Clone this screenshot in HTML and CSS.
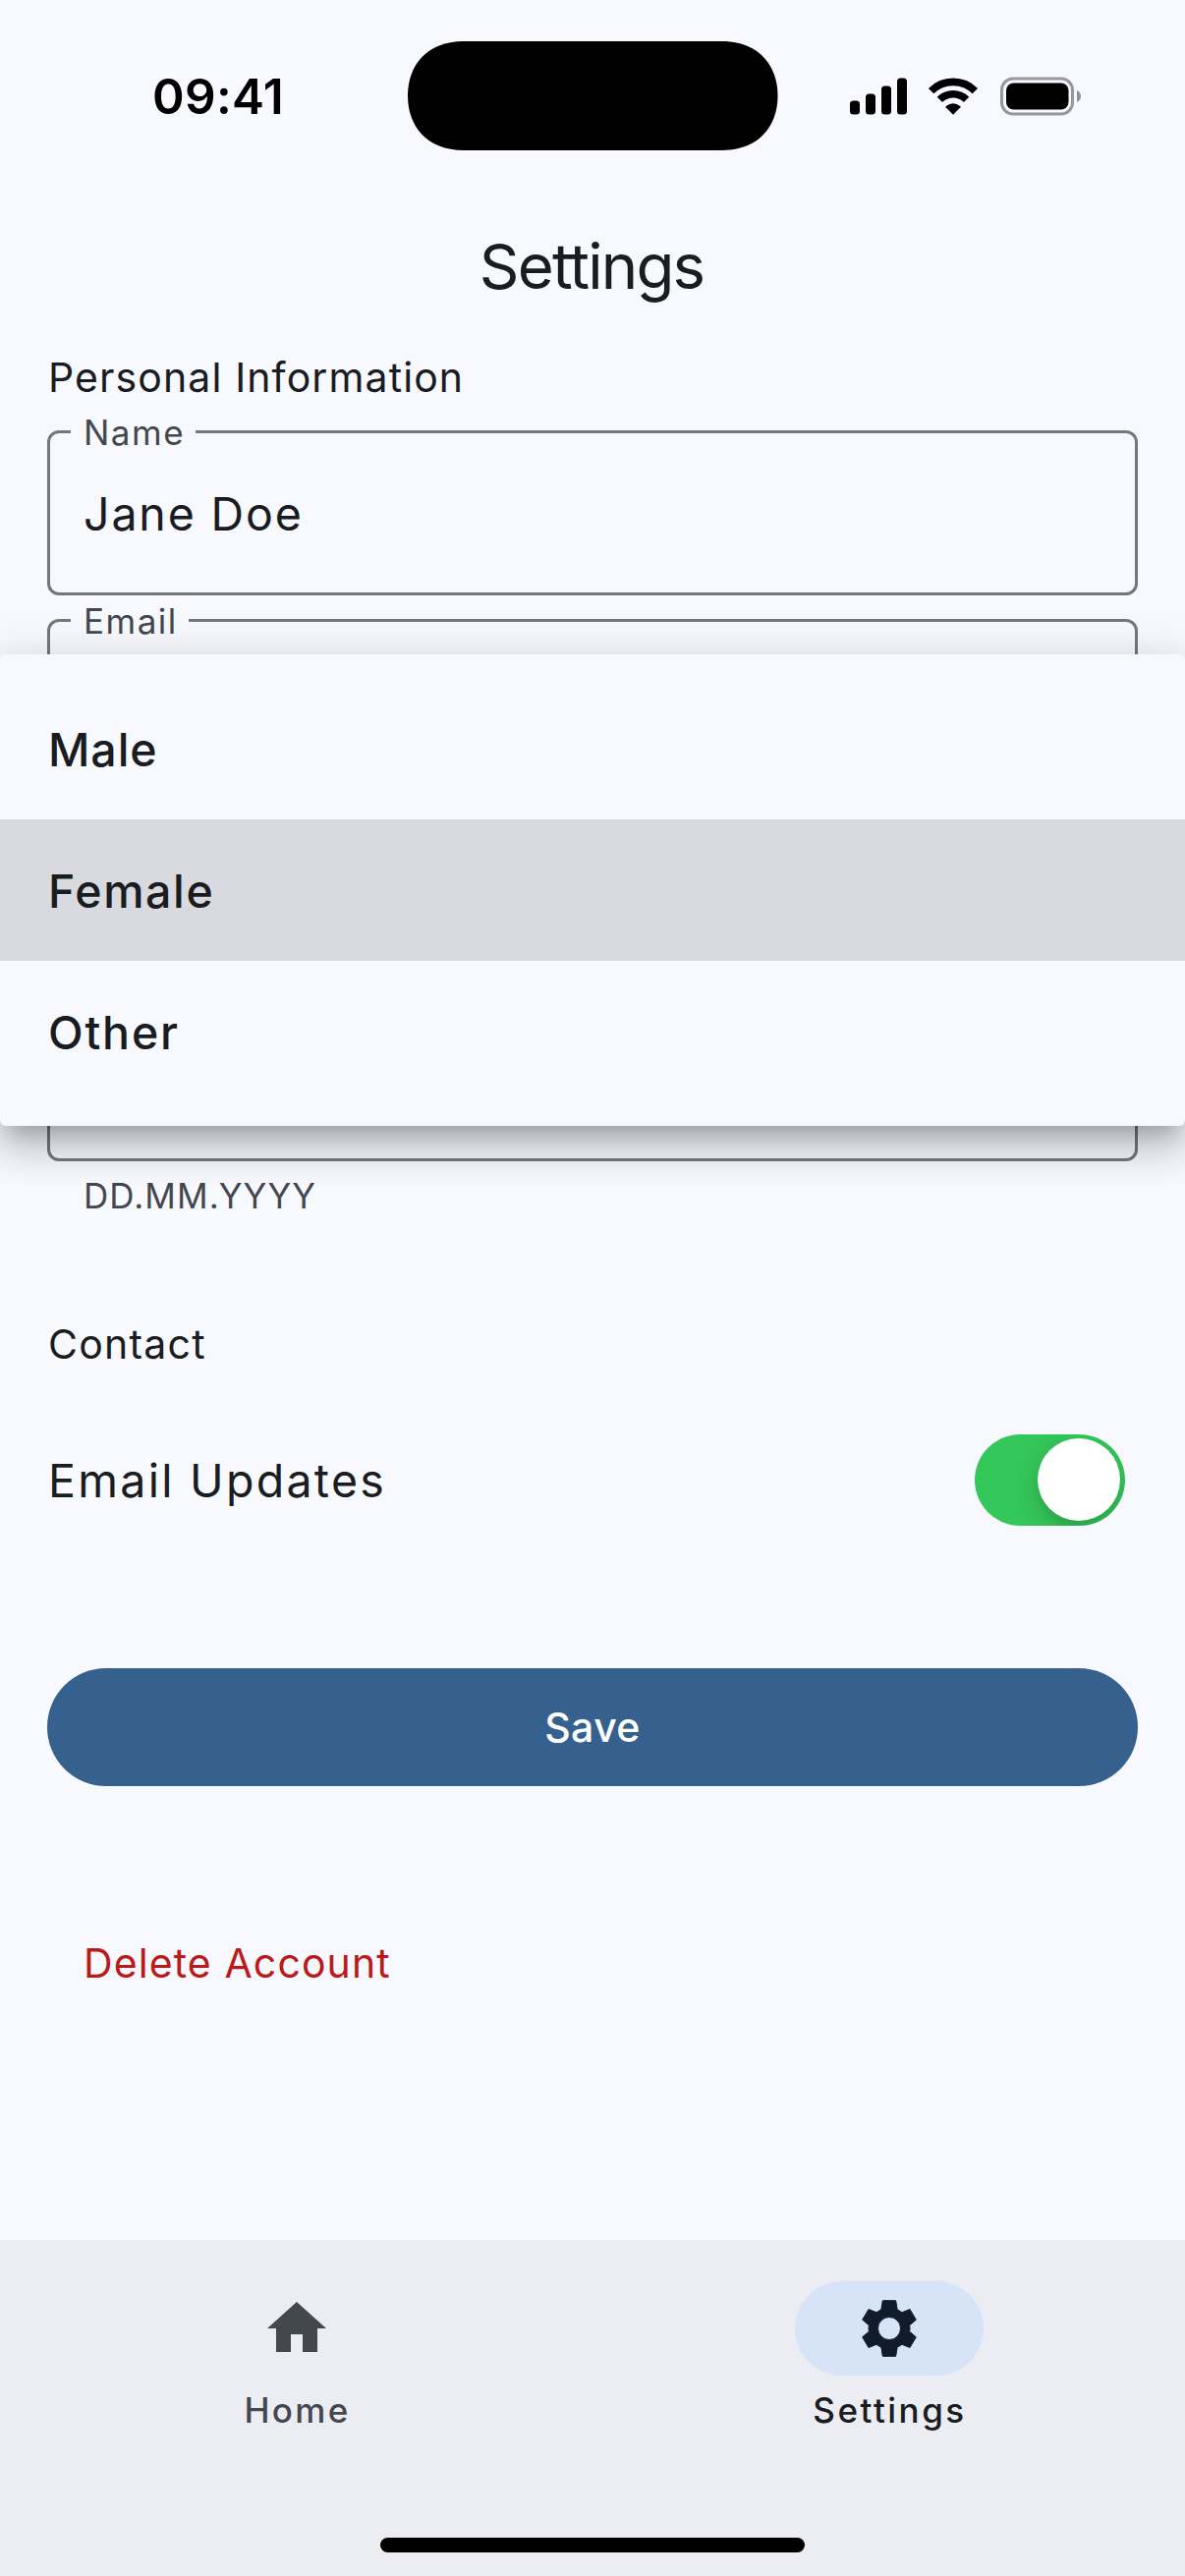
FILE: index.html
```html
<!DOCTYPE html>
<html lang="en">
<head>
<meta charset="utf-8">
<title>Settings</title>
<link rel="stylesheet" href="styles.css">
</head>
<body>
<div class="phone">
  <header class="status">
    <div class="status-left"><span class="time">09:41</span></div>
    <svg class="island" viewBox="0 0 377 111" aria-hidden="true">
      <path d="M57 0H320C358 0 377 25 377 55.500C377 86 358 111 320 111H57C19 111 0 86 0 55.500C0 25 19 0 57 0Z"/>
    </svg>
    <div class="status-right">
      <svg class="signal" viewBox="0 0 58 40" aria-hidden="true">
        <rect x="0" y="24.500" width="10" height="14" rx="3.500"/>
        <rect x="16" y="17.500" width="10" height="21" rx="3.500"/>
        <rect x="32" y="9.500" width="10" height="29" rx="3.500"/>
        <rect x="48" y="1.500" width="10" height="37" rx="3.500"/>
      </svg>
      <svg class="wifi" viewBox="0 0 52 40" aria-hidden="true">
        <path class="wave" d="M3.660 14.660A31.600 31.600 0 0 1 48.340 14.660"/>
        <path class="wave" d="M12.420 23.420A19.200 19.200 0 0 1 39.580 23.420"/>
        <path d="M26 38.800L18.600 31.300Q18.200 30.600 18.800 30Q26 24.300 33.200 30Q33.800 30.600 33.400 31.300Z"/>
      </svg>
      <svg class="battery" viewBox="0 0 83 40" aria-hidden="true">
        <rect class="shell" x="1.500" y="2" width="72" height="36" rx="11.500"/>
        <rect x="6" y="6.500" width="63.500" height="27" rx="7.500"/>
        <path class="nub" d="M78 14C80.600 15.200 82 17.400 82 20S80.600 24.800 78 26Z"/>
      </svg>
    </div>
  </header>

  <h1 class="title">Settings</h1>

  <main class="content">
    <h2 class="section personal">Personal Information</h2>
    <div class="fields">
      <div class="field"><span class="label">Name</span><span class="value">Jane Doe</span></div>
      <div class="field"><span class="label label-email">Email</span></div>
      <div class="field"></div>
      <div class="field"></div>
    </div>
    <p class="helper">DD.MM.YYYY</p>

    <h2 class="section contact">Contact</h2>
    <div class="row">
      <span class="row-text">Email Updates</span>
      <span class="switch"><span class="thumb"></span></span>
    </div>

    <button class="save">Save</button>
    <a class="delete">Delete Account</a>
  </main>

  <ul class="menu">
    <li class="option male">Male</li>
    <li class="option selected">Female</li>
    <li class="option other">Other</li>
  </ul>

  <nav class="nav">
    <div class="tabs">
      <div class="tab">
        <span class="pill"><svg class="icon" viewBox="0 0 24 24" aria-hidden="true"><path d="M10 20v-6h4v6h5v-8h3L12 3 2 12h3v8z"/></svg></span>
        <span class="tab-label home-label">Home</span>
      </div>
      <div class="tab active">
        <span class="pill"><svg class="icon gear" viewBox="-108 -108 216 216" aria-hidden="true"><path fill-rule="evenodd" d="M-20 -85H20L24.500 -58L39 -49L63 -58.500L82 -26.500L62 -9.500Q64 0 62 9.500L82 26.500L63 58.500L39 49L24.500 58L20 85H-20L-24.500 58L-39 49L-63 58.500L-82 26.500L-62 9.500Q-64 0 -62 -9.500L-82 -26.500L-63 -58.500L-39 -49L-24.500 -58ZM0 -34.500A34.500 34.500 0 1 0 0 34.500A34.500 34.500 0 1 0 0 -34.500Z"/></svg></span>
        <span class="tab-label">Settings</span>
      </div>
    </div>
    <div class="indicator"></div>
  </nav>
</div>
</body>
</html>
```
FILE: styles.css
```css
* { box-sizing: border-box; margin: 0; padding: 0; }

body {
  font-family: Inter, "Liberation Sans", sans-serif;
  color: #191c20;
  background: #f8f9ff;
}

.phone {
  position: relative;
  display: flex;
  flex-direction: column;
  width: 1206px;
  height: 2622px;
  overflow: hidden;
  background: #f8f9ff;
}

/* Status bar */
.status { display: flex; align-items: center; height: 195px; color: #000; }
.status-left { width: 415px; padding-left: 155px; }
.time { display: block; font-size: 49.500px; font-weight: 600; line-height: 60px; letter-spacing: 0.300px; }
.island { width: 376.500px; height: 111px; margin-top: -1px; }
.status-right { display: flex; align-items: center; padding-left: 73.500px; }
.signal { width: 58px; height: 40px; }
.wifi { width: 52px; height: 40px; margin-left: 21px; }
.wave { fill: none; stroke: #000; stroke-width: 7.600; }
.battery { width: 83px; height: 40px; margin-left: 22px; }
.shell { fill: none; stroke: #97989c; stroke-width: 3; }
.nub { fill: #8f9094; }

.title {
  height: 151px;
  padding-right: 2px;
  font-size: 63.500px;
  font-weight: 400;
  line-height: 151px;
  letter-spacing: -1.850px;
  text-align: center;
}

/* Form */
.content { display: flex; flex-direction: column; padding: 8px 48px 0; }
.section { padding-left: 1px; font-size: 41px; font-weight: 400; line-height: 60px; }
.personal { letter-spacing: 1.100px; }
.fields { display: flex; flex-direction: column; gap: 24px; margin-top: 24px; }
.field {
  position: relative;
  display: flex;
  align-items: center;
  width: 1110px;
  height: 168px;
  padding: 2px 34px 0;
  border: 3px solid #73777f;
  border-radius: 12px;
}
.label {
  position: absolute;
  top: -23px;
  left: 21px;
  width: 127px;
  padding-left: 13px;
  font-size: 35px;
  line-height: 44px;
  letter-spacing: 1.500px;
  color: #43474e;
  background: #f8f9ff;
}
.label-email { width: 120px; }
.value { font-size: 46.500px; line-height: 60px; letter-spacing: 1.850px; }
.helper {
  margin-top: 11px;
  padding-left: 37px;
  font-size: 35px;
  line-height: 48px;
  letter-spacing: 1.090px;
  color: #43474e;
}
.contact { margin-top: 97px; letter-spacing: 1.230px; }

.row {
  display: flex;
  align-items: center;
  justify-content: space-between;
  height: 144px;
  margin-top: 36px;
  padding-right: 13.500px;
}
.row-text { padding: 2px 0 0 1px; font-size: 46.500px; line-height: 60px; letter-spacing: 2.280px; }
.switch {
  display: flex;
  align-items: center;
  justify-content: flex-end;
  width: 153px;
  height: 93px;
  padding-right: 4.500px;
  border-radius: 46.500px;
  overflow: hidden;
  background: #34c759;
}
.thumb {
  width: 84px;
  height: 84px;
  border-radius: 50%;
  background: #fff;
  box-shadow: 0 9px 31px rgba(0, 0, 0, 0.150), 0 9px 6px rgba(0, 0, 0, 0.060);
}

.save {
  height: 120px;
  margin-top: 120px;
  border: 0;
  border-radius: 60px;
  font: 500 41px/120px Inter, "Liberation Sans", sans-serif;
  letter-spacing: 0.400px;
  color: #fff;
  background: #36618e;
}
.delete {
  margin-top: 150px;
  padding-left: 37px;
  font-size: 41px;
  line-height: 60px;
  letter-spacing: 1.100px;
  color: #ba1a1a;
}

/* Dropdown menu floating over the form */
.menu {
  position: absolute;
  top: 666px;
  left: 0;
  width: 1206px;
  padding: 24px 0;
  border-radius: 6px;
  list-style: none;
  background: #f8f9ff;
  box-shadow:
    0 15px 20px -9px rgba(0, 0, 0, 0.200),
    0 24px 38px 3px rgba(0, 0, 0, 0.140),
    0 9px 51px 6px rgba(0, 0, 0, 0.120);
}
.option {
  height: 144px;
  padding: 1px 49px 0;
  font-size: 46.500px;
  font-weight: 500;
  line-height: 144px;
  letter-spacing: 1.590px;
}
.male { letter-spacing: 0.900px; }
.other { letter-spacing: 1.800px; }
.selected { background: #d9dadf; }

/* Bottom navigation */
.nav {
  display: flex;
  flex-direction: column;
  justify-content: space-between;
  height: 342px;
  margin-top: auto;
  padding: 42px 0 24px;
  background: #ecedf3;
}
.tabs { display: flex; }
.tab { flex: 1; display: flex; flex-direction: column; align-items: center; gap: 11px; color: #43474e; }
.pill { display: flex; align-items: center; justify-content: center; width: 192px; height: 96px; border-radius: 48px; }
.icon { width: 72px; height: 72px; fill: #43474e; }
.tab-label { padding-left: 2px; font-size: 35px; font-weight: 500; line-height: 48px; letter-spacing: 2.490px; }
.home-label { letter-spacing: 2.340px; }
.active { color: #191c20; }
.active .pill { background: #d7e3f7; }
.active .gear { fill: #101c2b; stroke: #101c2b; stroke-width: 3; stroke-linejoin: round; }
.indicator { width: 432px; height: 15px; margin: 0 auto; border-radius: 7.500px; background: #000; }
```
